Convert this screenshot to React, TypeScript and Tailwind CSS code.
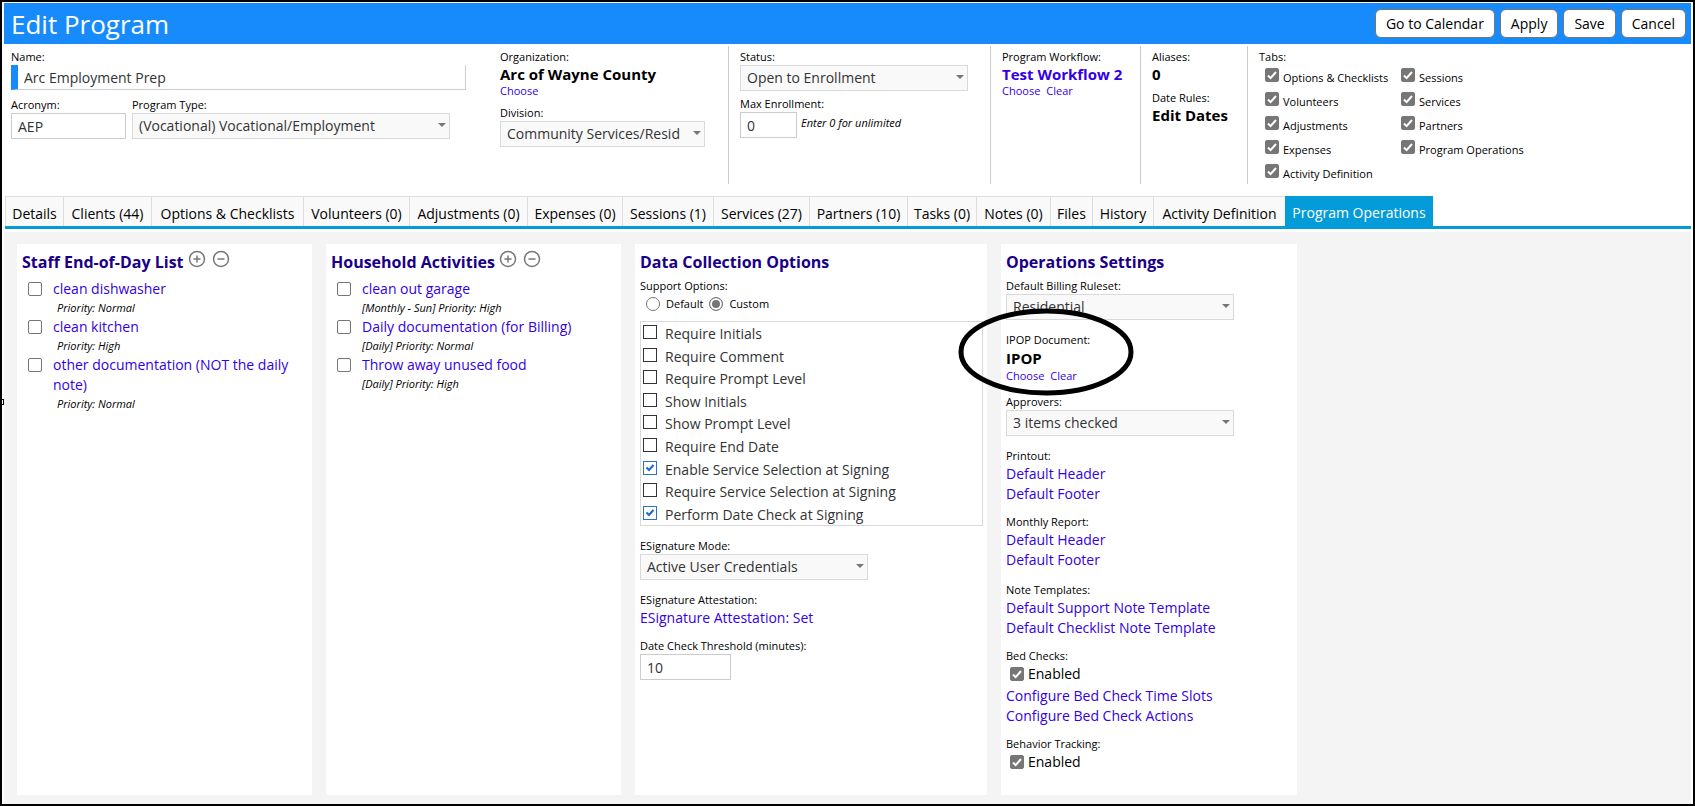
import { CircleMinus, CirclePlus } from "lucide-react";
import { clsx } from "clsx";
import type { ReactNode } from "react";

const TABS = [
  { label: "Details", width: "w-[58px]" },
  { label: "Clients (44)", width: "w-[88px]" },
  { label: "Options & Checklists", width: "w-[152px]" },
  { label: "Volunteers (0)", width: "w-[106px]" },
  { label: "Adjustments (0)", width: "w-[118px]" },
  { label: "Expenses (0)", width: "w-[95px]" },
  { label: "Sessions (1)", width: "w-[91px]" },
  { label: "Services (27)", width: "w-[96px]" },
  { label: "Partners (10)", width: "w-[98px]" },
  { label: "Tasks (0)", width: "w-[69px]" },
  { label: "Notes (0)", width: "w-[74px]" },
  { label: "Files", width: "w-[42px]" },
  { label: "History", width: "w-[61px]" },
  { label: "Activity Definition", width: "w-[132px]" },
  { label: "Program Operations", width: "w-[148px]" },
];

const VISIBLE_TABS = [
  ["Options & Checklists", "Volunteers", "Adjustments", "Expenses", "Activity Definition"],
  ["Sessions", "Services", "Partners", "Program Operations"],
];

const STAFF_ITEMS = [
  { name: "clean dishwasher", note: "Priority: Normal" },
  { name: "clean kitchen", note: "Priority: High" },
  { name: "other documentation (NOT the daily note)", note: "Priority: Normal" },
];

const HOUSEHOLD_ITEMS = [
  { name: "clean out garage", note: "[Monthly - Sun] Priority: High" },
  { name: "Daily documentation (for Billing)", note: "[Daily] Priority: Normal" },
  { name: "Throw away unused food", note: "[Daily] Priority: High" },
];

const SUPPORT_OPTIONS = [
  { label: "Require Initials", checked: false },
  { label: "Require Comment", checked: false },
  { label: "Require Prompt Level", checked: false },
  { label: "Show Initials", checked: false },
  { label: "Show Prompt Level", checked: false },
  { label: "Require End Date", checked: false },
  { label: "Enable Service Selection at Signing", checked: true },
  { label: "Require Service Selection at Signing", checked: false },
  { label: "Perform Date Check at Signing", checked: true },
];

function Label({ htmlFor, children }: { htmlFor?: string; children: ReactNode }) {
  const style = "block whitespace-nowrap text-[11px] leading-4";
  return htmlFor ? (
    <label htmlFor={htmlFor} className={style}>{children}</label>
  ) : (
    <p className={style}>{children}</p>
  );
}

function Link({ id, children, small }: { id?: string; children: ReactNode; small?: boolean }) {
  return (
    <a id={id} href="#" className={clsx("text-[#3300e6]", small ? "text-[11px] leading-4" : "block text-sm leading-5")}>
      {children}
    </a>
  );
}

/** Drop-down with the label above it */
function SelectField({ id, label, value, width }: { id: string; label: string; value: string; width: string }) {
  return (
    <div className={width}>
      <Label htmlFor={id}>{label}</Label>
      <div className="relative">
        <select
          id={id}
          className="block h-[26px] w-full appearance-none border border-[#d9d9d9] bg-[#f9f9f9] pl-1.5 pr-6 text-sm leading-6 text-[#333]"
        >
          <option>{value}</option>
        </select>
        <svg viewBox="0 0 8 4" className="pointer-events-none absolute right-1 top-2.5 h-1 w-2 fill-[#777]">
          <path d="M0 0h8L4 4z" />
        </svg>
      </div>
    </div>
  );
}

function TextField({ id, label, value, width }: { id: string; label: string; value: string; width: string }) {
  return (
    <div className={width}>
      <Label htmlFor={id}>{label}</Label>
      <input
        id={id}
        defaultValue={value}
        className="block h-[26px] w-full border border-[#ccc] bg-white px-1.5 text-sm text-[#333]"
      />
    </div>
  );
}

/** Gray tick box, rounded like the browser's own */
function Checkbox({ id, checked, labelledBy }: { id: string; checked?: boolean; labelledBy?: string }) {
  return (
    <span className="inline-grid size-3.5 shrink-0">
      <input
        id={id}
        type="checkbox"
        defaultChecked={checked}
        aria-labelledby={labelledBy}
        className="peer col-start-1 row-start-1 size-3.5 appearance-none rounded-xs border border-[#767676] bg-white checked:bg-[#767676]"
      />
      <svg
        viewBox="0 0 14 14"
        className="pointer-events-none invisible col-start-1 row-start-1 size-3.5 peer-checked:visible"
      >
        <path d="M3 7.5l2.6 2.6L11 4" fill="none" stroke="#fff" strokeWidth="2" />
      </svg>
    </span>
  );
}

/** Square tick box of the support options list */
function SquareCheckbox({ id, checked }: { id: string; checked: boolean }) {
  return (
    <span className="inline-grid size-3.5 shrink-0">
      <input
        id={id}
        type="checkbox"
        defaultChecked={checked}
        className="peer col-start-1 row-start-1 size-3.5 appearance-none border border-[#333] bg-white checked:border-[#2b6fd0]"
      />
      <svg
        viewBox="0 0 14 14"
        className="pointer-events-none invisible col-start-1 row-start-1 size-3.5 peer-checked:visible"
      >
        <path d="M3.5 6.5l2.5 2.5L10.500 4" fill="none" stroke="#1c66d4" strokeWidth="2" />
      </svg>
    </span>
  );
}

function Radio({ id, label, checked }: { id: string; label: string; checked?: boolean }) {
  return (
    <span className="flex items-center gap-1.5">
      <input
        id={id}
        type="radio"
        name="support"
        defaultChecked={checked}
        className="size-3.5 appearance-none rounded-full border border-[#767676] bg-white checked:bg-[#767676] checked:shadow-[inset_0_0_0_2px_white]"
      />
      <label htmlFor={id} className="text-[11px] leading-4">{label}</label>
    </span>
  );
}

function Card({ title, width, actions, children }: { title: string; width: string; actions?: boolean; children: ReactNode }) {
  return (
    <section className={clsx("bg-white px-[5px] pt-1.5", width)}>
      <div className="mb-1 flex h-6 items-center gap-1">
        <h2 className="whitespace-nowrap text-base leading-6 font-bold text-[#1a0088]">{title}</h2>
        {actions && (
          <div className="mb-1.5 flex gap-1.5 text-[#777]">
            <button type="button" aria-label={`Add to ${title}`}>
              <CirclePlus size={18} strokeWidth={2} />
            </button>
            <button type="button" aria-label={`Remove from ${title}`}>
              <CircleMinus size={18} strokeWidth={2} />
            </button>
          </div>
        )}
      </div>
      {children}
    </section>
  );
}

function Checklist({ prefix, items, indent }: { prefix: string; items: typeof STAFF_ITEMS; indent?: boolean }) {
  return (
    <ul className="pt-px">
      {items.map((item, i) => (
        <li key={item.name} className="flex gap-[11px] pl-1.5">
          <span className="flex h-5 items-center">
            <Checkbox id={`${prefix}-${i}`} labelledBy={`${prefix}-${i}-name`} />
          </span>
          <div>
            <Link id={`${prefix}-${i}-name`}>{item.name}</Link>
            <p className={clsx("text-[11px] leading-[18px] italic", indent && "pl-1")}>{item.note}</p>
          </div>
        </li>
      ))}
    </ul>
  );
}

function EnabledBox({ id }: { id: string }) {
  return (
    <div className="flex h-5 items-center gap-1 pl-1">
      <Checkbox id={id} checked />
      <label htmlFor={id} className="text-sm leading-5">Enabled</label>
    </div>
  );
}

function Header() {
  return (
    <header className="flex h-[41px] items-center justify-between bg-[#188bfc] pl-[7px] pr-[5px]">
      <h1 className="text-[26px] leading-8 text-white">Edit Program</h1>
      <div className="flex gap-[5px]">
        {["Go to Calendar", "Apply", "Save", "Cancel"].map((name) => (
          <button
            key={name}
            type="button"
            className="h-[29px] rounded-md border border-[#767676] bg-white px-2.5 text-sm text-black"
          >
            {name}
          </button>
        ))}
      </div>
    </header>
  );
}

function ProgramForm() {
  return (
    <div className="mb-3 mt-0.5 flex h-[138px] *:shrink-0">
      <div className="w-[489px] pl-[7px] pt-[3px]">
        <Label htmlFor="name">Name:</Label>
        <input
          id="name"
          defaultValue="Arc Employment Prep"
          className="mb-[7px] block h-[25px] w-[455px] border-b border-l-[7px] border-r border-[#ccc] border-l-[#188bfc] px-1.5 text-sm text-[#333]"
        />
        <div className="flex gap-1.5">
          <TextField id="acronym" label="Acronym:" value="AEP" width="w-[115px]" />
          <SelectField id="type" label="Program Type:" value="(Vocational) Vocational/Employment" width="w-[318px]" />
        </div>
      </div>
      <div className="w-[236px] border-r border-[#ccc] pl-[7px] pt-[3px]">
        <Label>Organization:</Label>
        <p className="text-[15px] leading-[18px] font-bold">Arc of Wayne County</p>
        <div className="mb-1 flex h-[18px]">
          <Link small>Choose</Link>
        </div>
        <SelectField id="division" label="Division:" value="Community Services/Residential" width="w-[205px]" />
      </div>
      <div className="w-[262px] border-r border-[#ccc] pl-[11px] pt-[3px]">
        <SelectField id="status" label="Status:" value="Open to Enrollment" width="w-[228px]" />
        <div className="mt-[5px] flex items-center gap-1">
          <TextField id="max" label="Max Enrollment:" value="0" width="w-[57px]" />
          <p className="pt-3 text-[11px] italic">Enter 0 for unlimited</p>
        </div>
      </div>
      <div className="w-[150px] border-r border-[#ccc] pl-[11px] pt-[3px]">
        <Label>Program Workflow:</Label>
        <a href="#" className="block text-[15px] leading-[18px] font-bold text-[#3300e6]">Test Workflow 2</a>
        <div className="flex h-4 gap-1.5">
          <Link small>Choose</Link>
          <Link small>Clear</Link>
        </div>
      </div>
      <div className="w-[107px] border-r border-[#ccc] pl-[11px] pt-[3px]">
        <Label>Aliases:</Label>
        <p className="mb-[7px] text-[15px] leading-[18px] font-bold">0</p>
        <Label>Date Rules:</Label>
        <p className="text-[15px] leading-[18px] font-bold">Edit Dates</p>
      </div>
      <div className="pl-[11px] pt-[3px]">
        <Label>Tabs:</Label>
        <div className="flex pl-1.5">
          {VISIBLE_TABS.map((column) => (
            <div key={column[0]} className="w-[136px]">
              {column.map((name) => (
                <div key={name} className="flex h-6 items-start gap-1 pt-[3px]">
                  <Checkbox id={`show-${name}`} checked />
                  <label htmlFor={`show-${name}`} className="whitespace-nowrap pt-0.5 text-[11px] leading-4">
                    {name}
                  </label>
                </div>
              ))}
            </div>
          ))}
        </div>
      </div>
    </div>
  );
}

function TabBar() {
  return (
    <nav className="ml-px flex border-b-[3px] border-[#049cd8]">
      {TABS.map(({ label, width }) => (
        <button
          key={label}
          type="button"
          className={clsx(
            "h-[30px] shrink-0 whitespace-nowrap pt-1 text-center text-sm leading-5",
            width,
            label === "Program Operations"
              ? "bg-[#049cd8] text-white"
              : "border-l border-t border-[#ddd] bg-[#f9f9f9] text-black",
          )}
        >
          {label}
        </button>
      ))}
    </nav>
  );
}

function DataCollection() {
  return (
    <Card title="Data Collection Options" width="w-[352px]">
      <Label>Support Options:</Label>
      <div className="mb-[7px] flex h-5 items-center gap-1.5 pl-1.5">
        <Radio id="support-default" label="Default" />
        <Radio id="support-custom" label="Custom" checked />
      </div>
      <ul className="mb-3 grid h-[205px] w-[343px] grid-rows-9 overflow-hidden border border-[#d9d9d9]">
        {SUPPORT_OPTIONS.map((option) => (
          <li key={option.label} className="flex items-center gap-2 pl-0.5">
            <span className="flex pb-0.5">
              <SquareCheckbox id={option.label} checked={option.checked} />
            </span>
            <label htmlFor={option.label} className="pt-0.5 text-sm leading-5 text-[#333]">{option.label}</label>
          </li>
        ))}
      </ul>
      <SelectField id="esign" label="ESignature Mode:" value="Active User Credentials" width="w-[228px]" />
      <div className="mb-2.5 mt-3">
        <Label>ESignature Attestation:</Label>
        <Link>ESignature Attestation: Set</Link>
      </div>
      <TextField id="threshold" label="Date Check Threshold (minutes):" value="10" width="w-[91px]" />
    </Card>
  );
}

function OperationsSettings() {
  return (
    <Card title="Operations Settings" width="w-[296px]">
      <SelectField id="billing" label="Default Billing Ruleset:" value="Residential" width="w-[228px]" />
      <div className="relative mb-2.5 mt-3">
        <Label>IPOP Document:</Label>
        <p className="text-[15px] leading-5 font-bold">IPOP</p>
        <div className="flex h-4 gap-1.5">
          <Link small>Choose</Link>
          <Link small>Clear</Link>
        </div>
        {/* highlight ring round the document field */}
        <svg viewBox="0 0 176 88" className="pointer-events-none absolute -left-12 -top-6 h-[88px] w-44">
          <ellipse cx="88" cy="44" rx="85" ry="41" fill="none" stroke="#000" strokeWidth="5" />
        </svg>
      </div>
      <SelectField id="approvers" label="Approvers:" value="3 items checked" width="w-[228px]" />
      <div className="mt-3">
        <Label>Printout:</Label>
        <Link>Default Header</Link>
        <Link>Default Footer</Link>
      </div>
      <div className="mt-2.5">
        <Label>Monthly Report:</Label>
        <Link>Default Header</Link>
        <Link>Default Footer</Link>
      </div>
      <div className="mt-3">
        <Label>Note Templates:</Label>
        <Link>Default Support Note Template</Link>
        <Link>Default Checklist Note Template</Link>
      </div>
      <div className="mt-2.5">
        <Label>Bed Checks:</Label>
        <EnabledBox id="bed-checks" />
        <div className="pt-0.5">
          <Link>Configure Bed Check Time Slots</Link>
          <Link>Configure Bed Check Actions</Link>
        </div>
      </div>
      <div className="mt-2.5">
        <Label>Behavior Tracking:</Label>
        <EnabledBox id="behavior" />
      </div>
    </Card>
  );
}

export default function App() {
  return (
    <div className="relative flex min-h-screen flex-col border-2 border-black bg-white px-0.5 pt-px font-['Open_Sans','Noto_Sans',sans-serif] text-black">
      {/* panel handle on the left edge */}
      <span className="absolute left-0 top-[397px] h-1.5 w-0.5 border-y border-r border-black" />
      <Header />
      <ProgramForm />
      <TabBar />
      <main className="mt-[3px] flex flex-1 gap-[14px] bg-[#f4f4f4] px-[13px] pb-[9px] pt-3 *:shrink-0">
        <Card title="Staff End-of-Day List" width="w-[295px]" actions>
          <Checklist prefix="staff" items={STAFF_ITEMS} indent />
        </Card>
        <Card title="Household Activities" width="w-[295px]" actions>
          <Checklist prefix="household" items={HOUSEHOLD_ITEMS} />
        </Card>
        <DataCollection />
        <OperationsSettings />
      </main>
    </div>
  );
}
